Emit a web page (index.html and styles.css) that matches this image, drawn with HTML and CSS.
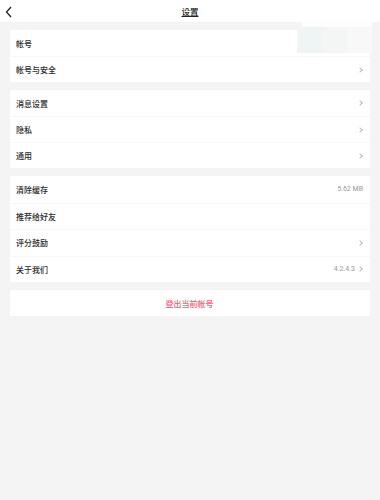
FILE: index.html
```html
<!DOCTYPE html>
<html lang="zh">
<head>
<meta charset="utf-8">
<link rel="stylesheet" href="styles.css">
</head>
<body>
<div class="header">
  <svg class="back" width="8" height="12" viewBox="0 0 8 12"><path d="M6 1 L1.5 6 L6 11" fill="none" stroke="#222" stroke-width="1.3"/></svg>
  <span class="title">设置</span>
</div>
<div class="content">
  <div class="card">
    <div class="row"><span class="label">帐号</span></div>
    <div class="row"><span class="label">帐号与安全</span><span class="chev"></span></div>
  </div>
  <div class="card">
    <div class="row"><span class="label">消息设置</span><span class="chev"></span></div>
    <div class="row"><span class="label">隐私</span><span class="chev"></span></div>
    <div class="row"><span class="label">通用</span><span class="chev"></span></div>
  </div>
  <div class="card tall">
    <div class="row"><span class="label">清除缓存</span><span class="value">5.62 MB</span></div>
    <div class="row"><span class="label">推荐给好友</span></div>
    <div class="row"><span class="label">评分鼓励</span><span class="chev"></span></div>
    <div class="row"><span class="label">关于我们</span><span class="value">4.2.4.3</span><span class="chev"></span></div>
  </div>
  <div class="card">
    <div class="row logout">登出当前帐号</div>
  </div>
</div>
<div class="ghost">
  <div class="ghost-strip"></div>
  <div class="ghost-blocks"><span class="g1"></span><span class="g2"></span><span class="g3"></span></div>
</div>
</body>
</html>
```
FILE: styles.css
```css
html, body {
  margin: 0;
  padding: 0;
}
body {
  background: #f4f4f4;
  font-family: "Noto Sans CJK SC", "Noto Sans", sans-serif;
  color: #333;
  width: 380px;
  height: 500px;
  position: relative;
}
.header {
  height: 22px;
  background: #fff;
  display: flex;
  align-items: center;
  justify-content: center;
  position: relative;
}
.back {
  position: absolute;
  left: 5px;
  top: 6px;
}
.title {
  font-size: 8.5px;
  color: #222;
  text-decoration: underline;
  text-underline-offset: 1px;
  font-weight: 500;
}
.content {
  display: flex;
  flex-direction: column;
  gap: 8px;
  padding: 8px 10px;
}
.card {
  background: #fff;
}
.row {
  height: 26px;
  display: flex;
  align-items: center;
  padding: 0 7px 0 6px;
  font-size: 8px;
  box-sizing: border-box;
}
.tall .row {
  height: 26.5px;
}
.row + .row {
  border-top: 1px solid #f8f8f8;
}
.label {
  flex: 1;
  color: #2b2b2b;
  font-weight: 500;
}
.value {
  font-size: 7px;
  color: #999;
  font-family: "Roboto", "Noto Sans", sans-serif;
}
.value + .chev {
  margin-left: 3px;
}
.chev {
  width: 3px;
  height: 3px;
  border-top: 0.8px solid #bbb;
  border-right: 0.8px solid #bbb;
  transform: rotate(45deg);
  margin-right: 1px;
}
.logout {
  justify-content: center;
  color: #ff5574;
  font-weight: 500;
}
.ghost {
  position: absolute;
  left: 297px;
  top: 21px;
  width: 75px;
}
.ghost-strip {
  margin-left: 5px;
  height: 6px;
  background: #fdfdfd;
}
.ghost-blocks {
  display: flex;
  height: 26px;
}
.ghost-blocks span {
  flex: 1;
}
.g1 { background: #eff5f5; }
.g2 { background: #f4f5f5; }
.g3 { background: #f8f8f8; }
```
